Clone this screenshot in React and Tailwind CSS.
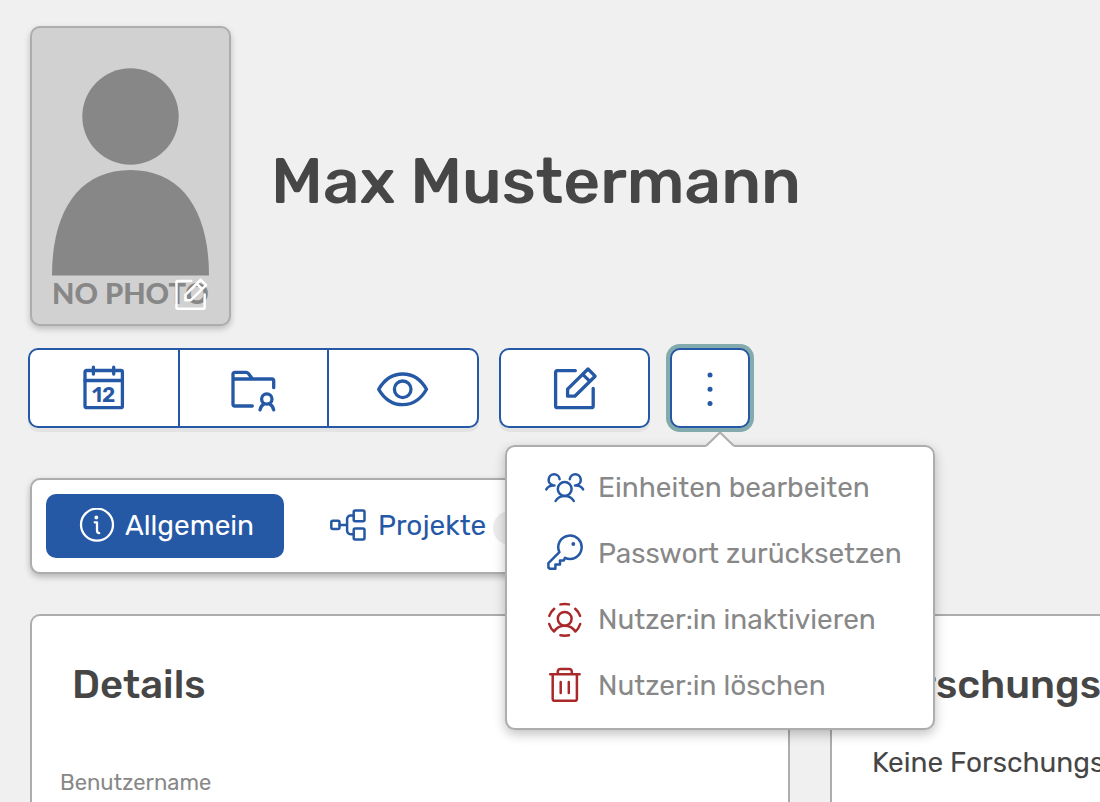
function Icon({ width = 40, height = 40, stroke = 2.5, children }) {
  return (
    <svg
      className="shrink-0"
      width={width}
      height={height}
      viewBox={`0 0 ${width} ${height}`}
      fill="none"
      stroke="currentColor"
      strokeWidth={stroke}
      strokeLinecap="round"
      strokeLinejoin="round"
      aria-hidden="true"
    >
      {children}
    </svg>
  );
}

function CalendarIcon() {
  return (
    <Icon width={48} height={48} stroke={3.3}>
      <rect x="5" y="6.5" width="37.4" height="37.2" rx="1.5" />
      <path d="M5 16.5H42.4M13.4 3.2V10M33.7 3.2V10" />
      <text
        x="23.6"
        y="37.6"
        textAnchor="middle"
        fill="currentColor"
        stroke="none"
        className="font-[Rubik,Roboto,sans-serif] text-[21px] font-semibold"
      >
        12
      </text>
    </Icon>
  );
}

function FolderUserIcon() {
  return (
    <Icon width={48} height={48} stroke={3.3}>
      <path d="M22.3 42H4.5A1.5 1.5 0 0 1 3 40.5V10A1.7 1.7 0 0 1 4.7 8.3H16C17 8.3 17.6 8.6 18.2 9.3L22.5 15M3 15H42.2A1.5 1.5 0 0 1 43.7 16.5V23.7" />
      <circle cx="36.8" cy="35" r="5.2" />
      <path d="M30 45.8C30.7 43 32 41 34.2 39.8M43.7 45.8C43 43 41.6 41 39.4 39.8" />
    </Icon>
  );
}

function EyeIcon() {
  return (
    <Icon width={56} height={48} stroke={3.3}>
      <path d="M3.7 25.3C9.5 15.4 18 10 27.7 10S45.9 15.4 51.5 25.3C45.9 35.2 37.5 40.7 27.7 40.7S9.5 35.2 3.7 25.3Z" />
      <circle cx="27.7" cy="25.3" r="8.3" />
    </Icon>
  );
}

function EditIcon({ size = 48, stroke = 3.3 }) {
  return (
    <svg
      width={size}
      height={size}
      viewBox="0 0 48 48"
      fill="none"
      stroke="currentColor"
      strokeWidth={stroke}
      strokeLinecap="round"
      strokeLinejoin="round"
      aria-hidden="true"
    >
      <path d="M24.3 6.7H6.1A1.5 1.5 0 0 0 4.6 8.2V42.2A1.5 1.5 0 0 0 6.1 43.7H40.7A1.5 1.5 0 0 0 42.2 42.2V24.5" />
      <path d="M16.6 25.2L37 5L44.1 12.2L23.8 32.2H16.6ZM31.7 10.3L38.9 17.4" />
    </svg>
  );
}

function DotsIcon() {
  return (
    <Icon width={48} height={48} stroke={0}>
      <g fill="currentColor">
        <circle cx="24" cy="11" r="2.5" />
        <circle cx="24" cy="25.3" r="2.5" />
        <circle cx="24" cy="39.6" r="2.5" />
      </g>
    </Icon>
  );
}

function InfoIcon() {
  return (
    <Icon width={36} height={36} stroke={2.3}>
      <circle cx="18" cy="16.7" r="16" />
      <path d="M15.7 14.3H18V22.6C18 24.3 18.7 25.2 20.2 25.2" />
      <circle cx="17.3" cy="9.5" r="1.9" fill="currentColor" stroke="none" />
    </Icon>
  );
}

function ProjectsIcon() {
  return (
    <Icon width={36} height={36}>
      <rect x="1.3" y="12.7" width="8.2" height="8.4" rx="1.5" />
      <rect x="23.7" y="2.4" width="10.8" height="10.8" rx="1.5" />
      <rect x="23.7" y="20.6" width="10.8" height="11" rx="1.5" />
      <path d="M9.5 16.9H17M23.7 7.6H20.5A3.4 3.4 0 0 0 17.1 11V22.8A3.4 3.4 0 0 0 20.5 26.2H23.7" />
    </Icon>
  );
}

function GroupIcon() {
  return (
    <Icon>
      <circle cx="19.7" cy="21" r="6.9" />
      <path d="M10.6 33C12.4 29.8 15.6 27.9 19.7 27.9S27 29.8 28.8 33" />
      <path d="M14.6 11.2A5.5 5.5 0 1 0 8 17.2M9.4 17.4C5.6 17.2 2.6 18.7 1.3 21.4" />
      <path d="M24.8 11.2A5.5 5.5 0 1 1 31.4 17.2M30 17.4C33.8 17.2 36.8 18.7 38.1 21.4" />
    </Icon>
  );
}

function KeyIcon() {
  return (
    <Icon>
      <path d="M14.4 18.2A11.7 11.7 0 1 1 20 23.8L18.8 26.6H15V30.5H10.4V34.7H4.6L3.4 33.5V29.2Z" />
      <circle cx="28.3" cy="10" r="1.9" fill="currentColor" stroke="none" />
    </Icon>
  );
}

function DeactivateIcon() {
  return (
    <Icon>
      <circle cx="19.7" cy="18.8" r="6.9" />
      <path d="M4.2 24C5.1 26.9 6.7 29.5 9 31.5C11.4 27.9 14.8 25.7 19.7 25.7S28 27.9 30.4 31.5C32.7 29.5 34.3 26.9 35.2 24" />
      <path d="M15.4 4.4C18.2 3.8 21.2 3.8 24 4.4M15.4 35.2C18.2 35.8 21.2 35.8 24 35.2M9.2 8.8C6.9 10.8 5.2 13.2 4.3 15.9M30.2 8.8C32.5 10.8 34.2 13.2 35.1 15.9" />
    </Icon>
  );
}

function TrashIcon() {
  return (
    <Icon>
      <path d="M5.2 8.2H34.6M12.8 8.2V5.5A2.6 2.6 0 0 1 15.4 2.9H24.2A2.6 2.6 0 0 1 26.8 5.5V8.2" />
      <path d="M7.7 8.2V33A1.8 1.8 0 0 0 9.5 34.8H30.1A1.8 1.8 0 0 0 31.9 33V8.2M15.7 16V27M23.8 16V27" />
    </Icon>
  );
}

const menuItems = [
  { label: 'Einheiten bearbeiten', icon: GroupIcon, color: 'text-[#2558a5]' },
  { label: 'Passwort zurücksetzen', icon: KeyIcon, color: 'text-[#2558a5]' },
  { label: 'Nutzer:in inaktivieren', icon: DeactivateIcon, color: 'text-[#a9292b]' },
  { label: 'Nutzer:in löschen', icon: TrashIcon, color: 'text-[#a9292b]' },
];

function ActionMenu() {
  return (
    <div className="absolute top-[97px] -left-[165px] z-10 w-[430px] rounded-[10px] border-2 border-[#adadad] bg-white pt-2 pb-[9px] shadow-[0_4px_12px_rgba(0,0,0,0.25)]">
      <svg className="absolute -top-4 left-[197px]" width="32" height="17" viewBox="0 0 32 17" aria-hidden="true">
        <path d="M2 15L16 1.5L30 15V17H2Z" fill="#fff" />
        <path d="M2 15L16 1.5L30 15" fill="none" stroke="#adadad" strokeWidth="2" />
      </svg>
      <ul>
        {menuItems.map(({ label, icon: ItemIcon, color }) => (
          <li key={label}>
            <button type="button" className="flex h-[66px] w-full items-center gap-[13px] pl-[38px] text-[28px] text-[#888888]">
              <span className={color}>
                <ItemIcon />
              </span>
              {label}
            </button>
          </li>
        ))}
      </ul>
    </div>
  );
}

const actionButton =
  'flex h-20 items-center justify-center border-2 border-[#2558a5] bg-white text-[#2558a5]';

export default function App() {
  return (
    <div className="flex min-h-screen flex-col overflow-hidden bg-[#f0f0f0] pl-[30px] font-[Rubik,Roboto,sans-serif] text-[#464646]">
      <header className="flex items-center gap-10 pt-[26px]">
        <button
          type="button"
          aria-label="Foto bearbeiten"
          className="relative h-[300px] w-[201px] shrink-0 overflow-hidden rounded-[10px] border-2 border-[#adadad] bg-[#d1d1d1] shadow-[0_3px_6px_rgba(0,0,0,0.22)]"
        >
          <svg className="block w-full" viewBox="0 0 197 248" fill="#878787" aria-hidden="true">
            <circle cx="98.5" cy="88.5" r="48.2" />
            <path d="M20 247.5C20 183 47 142 98.5 142S177 183 177 247.5Z" />
          </svg>
          <span className="block h-12 text-center font-[Lato,sans-serif] text-[29px] leading-[34px] font-black whitespace-nowrap text-[#878787]">
            NO PHOTO
          </span>
          <span className="absolute right-5 bottom-3 text-white">
            <EditIcon size={36} stroke={3.3} />
          </span>
        </button>
        <h1 className="pt-[10px] text-[64px] leading-none font-medium">Max Mustermann</h1>
      </header>

      <div className="-ml-[2px] mt-[22px] flex">
        <div className="flex rounded-[10px] shadow-[0_4px_0_#e3e3e3]">
          <button type="button" aria-label="Kalender" className={`${actionButton} w-[152px] rounded-l-[10px]`}>
            <CalendarIcon />
          </button>
          <button type="button" aria-label="Nutzerordner" className={`${actionButton} -ml-[2px] w-[151px]`}>
            <FolderUserIcon />
          </button>
          <button type="button" aria-label="Ansehen" className={`${actionButton} -ml-[2px] w-[152px] rounded-r-[10px]`}>
            <EyeIcon />
          </button>
        </div>
        <button
          type="button"
          aria-label="Bearbeiten"
          className={`${actionButton} ml-5 w-[151px] rounded-[10px] shadow-[0_4px_0_#e3e3e3]`}
        >
          <EditIcon />
        </button>
        <div className="relative ml-5">
          <button
            type="button"
            aria-label="Weitere Aktionen"
            aria-expanded="true"
            className={`${actionButton} w-20 rounded-[10px] shadow-[0_0_0_4px_#83abad]`}
          >
            <DotsIcon />
          </button>
          <ActionMenu />
        </div>
      </div>

      <nav className="mt-[50px] flex w-[800px] rounded-[10px] border-2 border-[#adadad] bg-white p-[14px] text-[28px] shadow-[0_3px_6px_rgba(0,0,0,0.25)]">
        <a href="#allgemein" className="flex h-16 w-[238px] items-center gap-[10px] rounded-[10px] bg-[#2558a5] pl-[33px] text-white">
          <InfoIcon />
          Allgemein
        </a>
        <a href="#projekte" className="ml-[46px] flex h-16 items-center gap-3 text-[#2558a5]">
          <ProjectsIcon />
          Projekte
          <span className="-ml-[5px] mt-1 h-[34px] w-12 rounded-full bg-[#ececec]" />
        </a>
      </nav>

      <main className="-mr-5 mt-10 flex grow gap-10">
        <section className="w-[760px] shrink-0 rounded-t-[10px] border-2 border-b-0 border-[#adadad] bg-white px-7 pt-[41px]">
          <h2 className="pl-3 text-[40px] leading-[56px] font-medium">Details</h2>
          <p className="mt-14 text-[22px] leading-7 text-[#888888]">Benutzername</p>
        </section>
        <section className="min-w-0 grow rounded-t-[10px] border-2 border-b-0 border-[#adadad] bg-white pt-[41px] pl-10 whitespace-nowrap">
          <h2 className="text-[40px] leading-[56px] font-medium">Forschungs</h2>
          <p className="mt-8 text-[28px] leading-9">Keine Forschungs</p>
        </section>
      </main>
    </div>
  );
}
